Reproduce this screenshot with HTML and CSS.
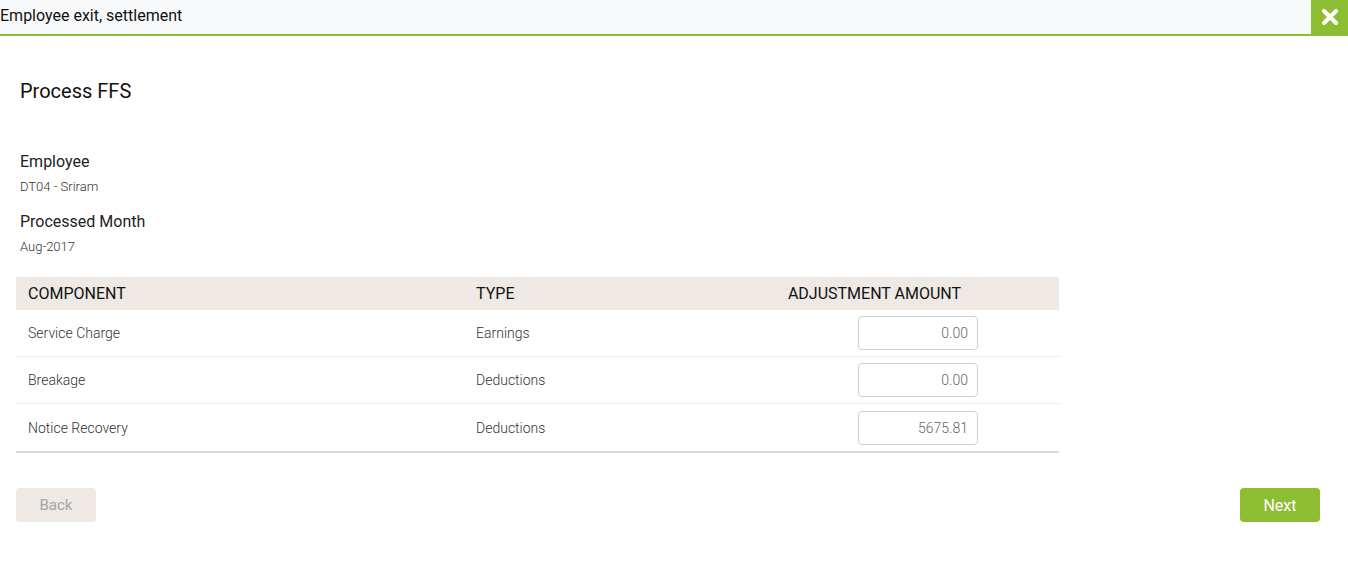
FILE: index.html
```html
<!DOCTYPE html>
<html>
<head>
<meta charset="utf-8">
<link rel="stylesheet" href="styles.css">
</head>
<body>
<header class="topbar">
  <div class="topbar-title">Employee exit, settlement</div>
  <button class="close-btn" aria-label="Close">
    <svg width="18" height="18" viewBox="0 0 18 18"><path d="M3 3 L15 15 M15 3 L3 15" stroke="#fff" stroke-width="4.2" stroke-linecap="round"/></svg>
  </button>
</header>
<main class="content">
  <h1 class="page-title">Process FFS</h1>
  <div class="field">
    <div class="field-label">Employee</div>
    <div class="field-value">DT04 - Sriram</div>
  </div>
  <div class="field">
    <div class="field-label">Processed Month</div>
    <div class="field-value">Aug-2017</div>
  </div>
  <div class="table">
    <div class="row head">
      <div class="cell c1">COMPONENT</div>
      <div class="cell c2">TYPE</div>
      <div class="cell c3 center">ADJUSTMENT AMOUNT</div>
    </div>
    <div class="row">
      <div class="cell c1">Service Charge</div>
      <div class="cell c2">Earnings</div>
      <div class="cell c3 amt"><input class="amount" value="0.00"></div>
    </div>
    <div class="row">
      <div class="cell c1">Breakage</div>
      <div class="cell c2">Deductions</div>
      <div class="cell c3 amt"><input class="amount" value="0.00"></div>
    </div>
    <div class="row last">
      <div class="cell c1">Notice Recovery</div>
      <div class="cell c2">Deductions</div>
      <div class="cell c3 amt"><input class="amount" value="5675.81"></div>
    </div>
  </div>
  <div class="actions">
    <button class="btn btn-back">Back</button>
    <button class="btn btn-next">Next</button>
  </div>
</main>
</body>
</html>
```
FILE: styles.css
```css
* { box-sizing: border-box; }
html, body { margin: 0; padding: 0; background: #fff; }
body { font-family: Roboto, "Noto Sans", sans-serif; color: #222; }

.topbar {
  height: 36px;
  background: #f8f9fb;
  border-bottom: 2px solid #8dbd32;
  display: flex;
  align-items: stretch;
  justify-content: space-between;
}
.topbar-title {
  font-size: 16px;
  line-height: 32px;
  color: #111;
}
.close-btn {
  width: 37px;
  height: 34px;
  border: 0;
  padding: 0;
  background: #8dbd32;
  display: flex;
  align-items: center;
  justify-content: center;
  cursor: pointer;
}

.content { padding: 0 28px 0 16px; }
.page-title {
  margin: 44px 0 0 4px;
  font-size: 20px;
  font-weight: 400;
  line-height: 22px;
  color: #111;
}
.field { margin-left: 4px; }
.page-title + .field { margin-top: 50px; }
.field + .field { margin-top: 18px; }
.field-label { font-size: 16px; line-height: 20px; color: #222; }
.field-value { font-size: 13px; line-height: 15px; margin-top: 7px; color: #333; font-weight: 300; }

.table { width: 1043px; margin-top: 23px; border-bottom: 2px solid #d9d9d9; }
.row {
  display: grid;
  grid-template-columns: 448px 226px 1fr;
  height: 47px;
  align-items: center;
  border-bottom: 1px solid #ece8e4;
  font-size: 14px;
  font-weight: 300;
  color: #333;
}
.row.last { border-bottom: 0; }
.row.head {
  height: 33px;
  background: #eee9e5;
  border-bottom: 0;
  font-size: 16px;
  font-weight: 400;
  color: #111;
}
.cell { padding-left: 12px; }
.cell.center { text-align: center; padding-left: 0; }
.cell.amt { display: flex; justify-content: flex-end; padding-right: 81px; }
.amount {
  width: 120px;
  height: 34px;
  border: 1px solid #cfcfcf;
  border-radius: 4px;
  text-align: right;
  padding: 0 9px 0 6px;
  font-family: Roboto, sans-serif;
  font-size: 14px;
  font-weight: 300;
  color: #666;
  background: #fff;
  outline: none;
}

.actions {
  display: flex;
  justify-content: space-between;
  margin-top: 35px;
}
.btn {
  width: 80px;
  height: 34px;
  border: 0;
  border-radius: 3px;
  font-family: Roboto, sans-serif;
  cursor: pointer;
}
.btn-back { background: #eee9e5; color: #a6a6a6; font-size: 15px; }
.btn-next { background: #8dbd32; color: #fff; font-size: 16px; border-radius: 4px; }
```
